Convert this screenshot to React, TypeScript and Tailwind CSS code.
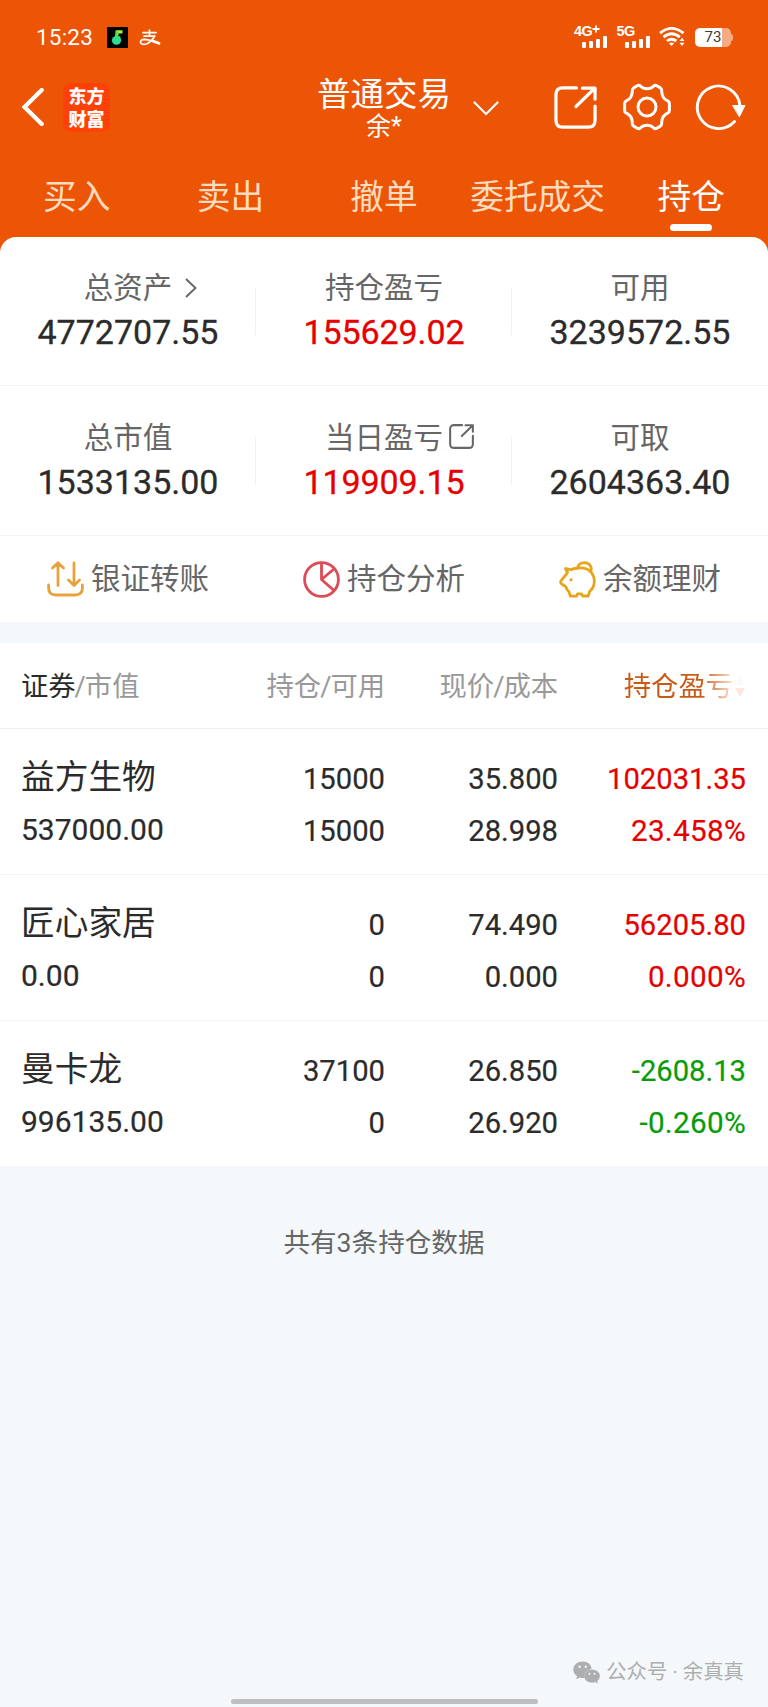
import React from "react";

const CJK = "font-[Roboto,'Noto_Sans_CJK_SC',sans-serif]";

function ShareIcon({ className, width }: { className: string; width: number }) {
  return (
    <svg viewBox="0 0 44 44" className={className} fill="none" stroke="currentColor" strokeWidth={width} strokeLinecap="round" strokeLinejoin="round">
      <path d="M23 2H9Q2 2 2 9V35Q2 42 9 42H35Q42 42 42 35V20.500" />
      <path d="M22.500 21L41.500 2.500M29 2.200H42V13.500" />
    </svg>
  );
}

function StatusBar() {
  return (
    <div className="flex h-[74px] items-center pl-[36px] pr-[35px] text-white">
      <span className="w-[71px] text-[22.500px] leading-none tracking-[0.2px]">15:23</span>
      <svg viewBox="0 0 21 21" className="h-[21px] w-[21px]">
        <rect width="21" height="21" fill="#000" />
        <path d="M9 3.200H15.500L15.500 6.500H11.500V9Z" fill="#a9ea3a" />
        <path d="M8.500 3.500H11.500L11 10H8Z" fill="#57e34c" />
        <ellipse cx="9.500" cy="13.300" rx="4.600" ry="4.400" fill="#2bdd96" />
        <path d="M9.500 9.200H13L14 14Z" fill="#4be04c" />
      </svg>
      <svg viewBox="0 0 22 17" className="ml-[11px] h-[17px] w-[22px]" fill="none" stroke="#fff" strokeLinecap="round">
        <path d="M4 3.700H17M10.500 1V7M5 7.200H15.500" strokeWidth="1.700" />
        <path d="M15.500 7.200Q13 12.500 8 14.700Q2.500 16.500 1.500 13.500Q1.300 10.500 5.500 10.300Q9 10.300 20 14.700" strokeWidth="1.700" />
        <path d="M14.500 12.200L20 14.200" strokeWidth="2.800" />
      </svg>
      <div className="ml-auto flex items-center">
        <Signal label="4G" plus />
        <Signal label="5G" />
        <svg viewBox="0 0 26 20" className="h-[20px] w-[26px]" fill="none" stroke="#fff" strokeLinecap="butt">
          <path d="M1 6.200Q12.500-3.500 24.500 6.200" strokeWidth="2.900" />
          <path d="M4.500 10.200Q12.500 3.500 20.800 10.200" strokeWidth="2.900" />
          <path d="M8 14Q12.500 10.300 17.300 14" strokeWidth="2.900" />
          <path d="M9.800 16.300Q12.500 14.500 15.200 16.300L12.500 19Z" fill="#fff" stroke="none" />
          <path d="M20.500 14L23 10.800L25.500 14ZM20.500 15.800H25.500L23 19Z" fill="#fff" stroke="none" />
        </svg>
        <div className="ml-[10px] flex h-[19px] w-[36px] items-center justify-center overflow-hidden rounded-[5px] bg-[linear-gradient(90deg,#fff_75%,#f6ab85_75%)] text-[15px] leading-none text-[#3b3b3b]">
          73
        </div>
        <div className="h-[7px] w-[2px] rounded-r-sm bg-[#f6ab85]" />
      </div>
    </div>
  );
}

function Signal({ label, plus = false }: { label: string; plus?: boolean }) {
  return (
    <div className="flex h-[22px] w-[42.500px] flex-col">
      <span className="flex h-[10px] whitespace-nowrap font-['Liberation_Sans',sans-serif] text-[14.500px] font-bold leading-[10px] tracking-[-0.500px]">
        {label}
        {plus && (
          <svg viewBox="0 0 8 8" className="-mt-px h-[8px] w-[8px]" stroke="currentColor" strokeWidth="1.800">
            <path d="M4 0.500V7.500M0.500 4H7.500" />
          </svg>
        )}
      </span>
      <div className="ml-[8px] flex h-[12px] items-end gap-[3px]">
        <i className="h-[6px] w-[4px] rounded-[1px] bg-white" />
        <i className="h-[7px] w-[4px] rounded-[1px] bg-white" />
        <i className="h-[9px] w-[4px] rounded-[1px] bg-white" />
        <i className="h-[12px] w-[4px] rounded-[1px] bg-white" />
      </div>
    </div>
  );
}

function TitleBar() {
  return (
    <div className="grid h-[66px] grid-cols-3 items-center text-white">
      <div className="flex items-center pl-[22px]">
        <svg viewBox="0 0 22 38" className="h-[38px] w-[22px]" fill="none" stroke="currentColor" strokeWidth="4.300" strokeLinecap="round" strokeLinejoin="miter">
          <path d="M19.700 2L2.500 19L19.700 36" />
        </svg>
        <div className="ml-[19px] flex h-[49px] w-[47px] items-center justify-center rounded-[8px] bg-[#ff4108] text-center font-['Noto_Sans_CJK_SC',sans-serif] text-[18px] font-black leading-[23px]">
          <span>
            东方
            <br />
            财富
          </span>
        </div>
      </div>
      <div className="relative flex flex-col items-center">
        <span className="h-[38px] text-[33.500px] leading-[38px]">普通交易</span>
        <span className="h-[25px] text-[25px] leading-[25px]">余*</span>
        <svg viewBox="0 0 26 15" className="absolute left-[217px] top-[25px] h-[15px] w-[26px]" fill="none" stroke="currentColor" strokeWidth="2.200" strokeLinecap="round">
          <path d="M1.500 1.500L13 13L24.500 1.500" />
        </svg>
      </div>
      <div className="flex items-center justify-end pr-[22px]">
        <ShareIcon className="h-[43px] w-[43px]" width={3.300} />
        <svg viewBox="0 0 48 48" className="ml-[26px] h-[48px] w-[48px]" fill="none" stroke="currentColor" strokeWidth="3" strokeLinejoin="round">
          <path d="M24 5.800Q28 5.800 30.500 3.200Q32 1.800 33.800 2.800L37.300 4.900Q39 6.200 38.700 8.500Q39 15.500 44.700 17.800Q46.400 18.600 46.400 20.500V27.500Q46.400 29.400 44.700 30.200Q39 32.500 38.700 39.500Q39 41.800 37.300 43.100L33.800 45.200Q32 46.200 30.500 44.800Q28 42.200 24 42.200Q20 42.200 17.500 44.800Q16 46.200 14.200 45.200L10.700 43.100Q9 41.800 9.300 39.500Q9 32.500 3.300 30.200Q1.600 29.400 1.600 27.500V20.500Q1.600 18.600 3.300 17.800Q9 15.500 9.300 8.500Q9 6.200 10.700 4.900L14.200 2.800Q16 1.800 17.500 3.200Q20 5.800 24 5.800Z" />
          <circle cx="24" cy="24" r="9" />
        </svg>
        <svg viewBox="0 0 51 48" className="ml-[24px] h-[48px] w-[51px]" fill="none" stroke="currentColor" strokeWidth="2.900" strokeLinecap="round">
          <path d="M44.800 22A21.300 21.300 0 1 0 39.500 38.500" />
          <path d="M38 22.500H50L44.500 33.500Z" fill="currentColor" stroke="currentColor" strokeWidth="1" strokeLinejoin="round" />
        </svg>
      </div>
    </div>
  );
}

function Tabs() {
  const tabs = ["买入", "卖出", "撤单", "委托成交", "持仓"];
  return (
    <nav className="grid h-[97px] grid-cols-5 pt-[38px] text-[33.700px] leading-[40px] text-[#ffdcc0]">
      {tabs.map((t) => (
        <div key={t} className={t === "持仓" ? "flex flex-col items-center text-white" : "flex flex-col items-center"}>
          <span className="whitespace-nowrap">{t}</span>
          {t === "持仓" && <span className="mt-[6px] h-[7px] w-[42px] rounded-full bg-white" />}
        </div>
      ))}
    </nav>
  );
}

function Stat({ label, value, red, divider, icon }: { label: string; value: string; red?: boolean; divider?: boolean; icon?: React.ReactNode }) {
  return (
    <div className="relative flex flex-col items-center pt-[31px]">
      <div className="relative text-[29.500px] leading-[40px] text-[#666]">
        {label}
        {icon}
      </div>
      <div className={red ? "mt-[4px] text-[34px] leading-[40px] tracking-[-0.100px] text-[#e60000] [-webkit-text-stroke:0.3px]" : "mt-[4px] text-[34px] leading-[40px] text-[#2b2b2b] [-webkit-text-stroke:0.3px]"}>{value}</div>
      {divider && <div className="absolute right-0 top-[50px] h-[48px] w-px bg-[#f1f1f1]" />}
    </div>
  );
}

function Summary() {
  return (
    <section className="bg-[#eb5505]">
      <div className="rounded-t-[16px] bg-white">
        <div className="grid h-[149px] grid-cols-3 border-b border-[#f3f4f4]">
          <Stat
            label="总资产"
            value="4772707.55"
            divider
            icon={
              <svg viewBox="0 0 12 20" className="absolute left-[101px] top-[10px] h-[20px] w-[12px]" fill="none" stroke="currentColor" strokeWidth="1.900">
                <path d="M1 1L10.500 10L1 19" />
              </svg>
            }
          />
          <Stat label="持仓盈亏" value="155629.02" red divider />
          <Stat label="可用" value="3239572.55" />
        </div>
        <div className="grid h-[150px] grid-cols-3 border-b border-[#f3f4f4] pt-px">
          <Stat label="总市值" value="1533135.00" divider />
          <Stat label="当日盈亏" value="119909.15" red divider icon={<ShareIcon className="absolute left-[124px] top-[6px] h-[25px] w-[25px]" width={3.600} />} />
          <Stat label="可取" value="2604363.40" />
        </div>
        <div className="grid h-[86px] grid-cols-3 items-center text-[29.500px] leading-[40px] text-[#666]">
          <div className="flex items-center justify-center gap-[7px]">
            <svg viewBox="0 0 37 36" className="h-[36px] w-[37px]" fill="none" stroke="#e8a23c" strokeWidth="2.800" strokeLinecap="round" strokeLinejoin="round">
              <path d="M1.600 24V27Q1.600 34 9 34H28Q35.400 34 35.400 27V24" />
              <path d="M11 24.500V2.500M5.500 7L11 1.800L16.500 7M27 1.800V24M21.500 19L27 24.500L32.500 19" />
            </svg>
            <span>银证转账</span>
          </div>
          <div className="flex items-center justify-center gap-[7px]">
            <svg viewBox="0 0 37 37" className="h-[37px] w-[37px]" fill="none" stroke="#de4a55" strokeWidth="2.800" strokeLinejoin="round">
              <circle cx="18.500" cy="18.500" r="16.900" />
              <path d="M18.500 1.600V18.500L31 29.500M18.500 18.500L31.500 7.500" />
            </svg>
            <span>持仓分析</span>
          </div>
          <div className="flex items-center justify-center gap-[7px]">
            <svg viewBox="0 0 37 37" className="h-[37px] w-[37px]" fill="none" stroke="#e9a51a" strokeWidth="2.800" strokeLinejoin="round" strokeLinecap="round">
              <path d="M6.500 7.500L11.500 8.700Q15.500 7 20 7Q27 6.500 31.500 10.500Q36 15.500 35.200 22Q34.500 27.500 30.500 30.500L29.300 35H23.500L22.500 32.800H18.500L17.500 35.200H11.500L9.800 30.500Q7.500 29 7 26L2 22.300Q1 20.500 3 18.500L6.800 14L8.500 11.500Z" />
              <path d="M18.500 6.800Q20 1.700 25.500 1.700Q31 2 32.300 7Q32.500 9 31.500 10.500" />
              <circle cx="12" cy="18.800" r="1.600" fill="#e9a51a" stroke="none" />
            </svg>
            <span>余额理财</span>
          </div>
        </div>
      </div>
    </section>
  );
}

interface Holding {
  name: string;
  value: string;
  qty: [string, string];
  price: [string, string];
  gain: [string, string];
  up: boolean;
}

const holdings: Holding[] = [
  { name: "益方生物", value: "537000.00", qty: ["15000", "15000"], price: ["35.800", "28.998"], gain: ["102031.35", "23.458%"], up: true },
  { name: "匠心家居", value: "0.00", qty: ["0", "0"], price: ["74.490", "0.000"], gain: ["56205.80", "0.000%"], up: true },
  { name: "曼卡龙", value: "996135.00", qty: ["37100", "0"], price: ["26.850", "26.920"], gain: ["-2608.13", "-0.260%"], up: false },
];

function Pair({ values }: { values: [string, string] }) {
  const percent = values[1].endsWith("%");
  return (
    <div className="flex flex-col gap-[12px] text-right text-[29.200px] [-webkit-text-stroke:0.2px]">
      <span>{values[0]}</span>
      <span className={percent ? "text-[29.700px] tracking-[0.3px]" : ""}>{values[1]}</span>
    </div>
  );
}

function Slash() {
  return <span className="-mx-[1px]">/</span>;
}

const COLS = "grid grid-cols-[220px_143px_173px_188px] px-[22px]";

function Holdings() {
  return (
    <section className="mt-[21px] bg-white">
      <div className={`${COLS} h-[86px] items-center border-b border-[#eeefef] pt-[3px] text-[27.300px] leading-[40px] text-[#999]`}>
        <span className="-ml-px">
          <span className="text-[#2b2b2b]">证券</span>
          <Slash />
          市值
        </span>
        <span className="whitespace-nowrap text-right">
          持仓
          <Slash />
          可用
        </span>
        <span className="whitespace-nowrap text-right">
          现价
          <Slash />
          成本
        </span>
        <span className="flex items-center justify-end">
          <span className="bg-[linear-gradient(90deg,#c95a14_0%,#c95a14_70%,#f7d9cb_98%)] bg-clip-text text-transparent">持仓盈亏</span>
          <svg viewBox="0 0 12 22" className="ml-[1px] h-[22px] w-[12px]">
            <path d="M1 9L6 1L11 9Z" fill="#fafafa" />
            <path d="M1 12H11L6 21Z" fill="#fde6dd" />
          </svg>
        </span>
      </div>
      {holdings.map((h) => (
        <div key={h.name} className={`${COLS} h-[146px] border-b border-[#f3f4f4] pt-[30px] text-[30px] leading-[40px] text-[#2b2b2b] last:h-[145px] last:border-0`}>
          <div className="-ml-px flex flex-col gap-[11px]">
            <span className="relative -top-px text-[33.700px]">{h.name}</span>
            <span className="[-webkit-text-stroke:0.2px]">{h.value}</span>
          </div>
          <Pair values={h.qty} />
          <Pair values={h.price} />
          <div className={h.up ? "text-[#e60000]" : "text-[#089c08]"}>
            <Pair values={h.gain} />
          </div>
        </div>
      ))}
    </section>
  );
}

export default function App() {
  return (
    <div className={`${CJK} flex h-[1707px] w-[768px] flex-col overflow-hidden bg-[#f4f8fa]`}>
      <header className="bg-[#eb5505]">
        <StatusBar />
        <TitleBar />
        <Tabs />
      </header>
      <Summary />
      <Holdings />
      <p className="mt-[57px] text-center text-[26.600px] leading-[40px] text-[#666]">共有3条持仓数据</p>
      <div className="mt-auto flex items-center justify-end pr-[24px] text-[20.400px] leading-[28px] text-[#acaeaf]">
        <svg viewBox="0 0 27 23" className="mr-[6px] h-[23px] w-[27px]">
          <path d="M9.800 0.500C4.500 0.500 0.300 4 0.300 8.800Q0.300 12.700 4 15.200L3.200 18.200L6.800 16.500Q9 17.200 11.500 17Q10 10 18.500 7.800Q17.500 0.500 9.800 0.500Z" fill="#acaeaf" />
          <path d="M19 8.500C14.500 8.500 11.200 11.500 11.200 15C11.200 18.800 14.500 21.500 19 21.500Q20.700 21.500 22.200 21L25 22.500L24.300 20Q26.900 18 26.900 15C26.900 11.500 23.500 8.500 19 8.500Z" fill="#acaeaf" />
          <g fill="#f4f8fa">
            <circle cx="6.700" cy="5.800" r="1.200" />
            <circle cx="12.800" cy="5.800" r="1.200" />
            <circle cx="16.500" cy="12.700" r="1" />
            <circle cx="21.500" cy="12.700" r="1" />
          </g>
        </svg>
        <span>公众号 · 余真真</span>
      </div>
      <div className="mx-auto mb-[3px] mt-[13px] h-[5px] w-[307px] shrink-0 rounded-full bg-[#bcbebf]" />
    </div>
  );
}
